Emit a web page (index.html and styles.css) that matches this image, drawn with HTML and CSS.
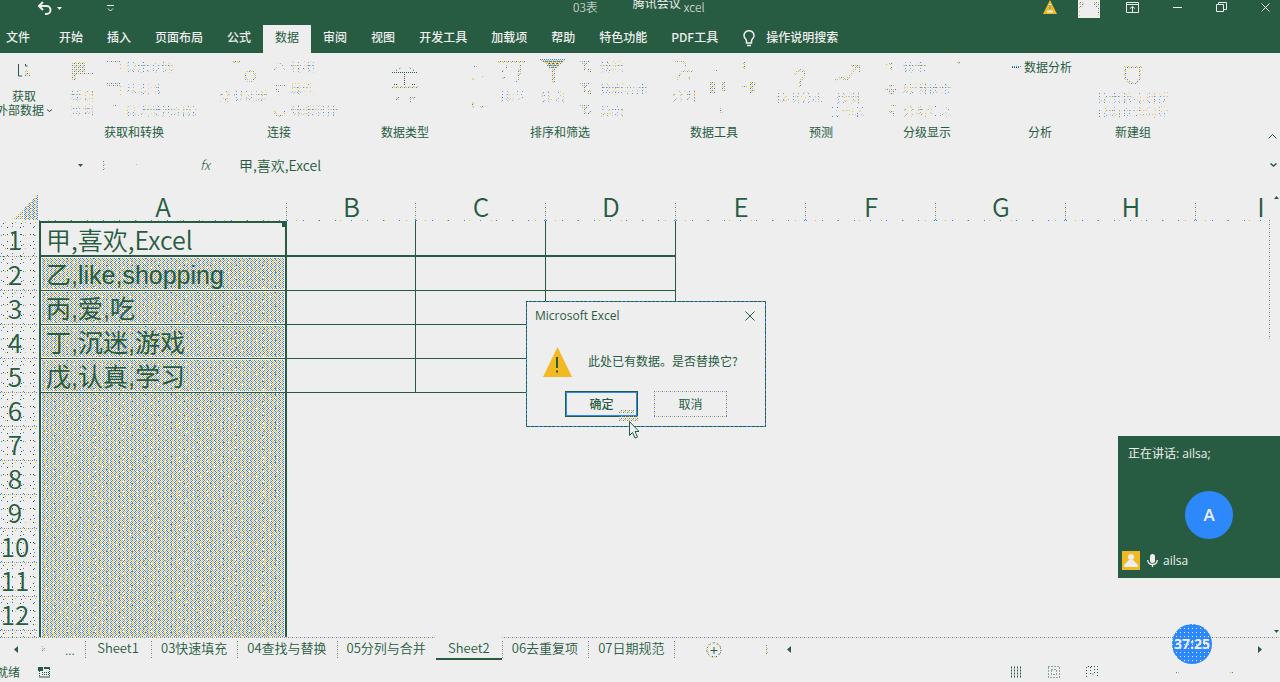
FILE: index.html
```html
<!DOCTYPE html>
<html lang="zh-CN">
<head>
<meta charset="utf-8">
<title>Excel</title>
<link rel="stylesheet" href="styles.css">
</head>
<body>
<svg class="defs" aria-hidden="true">
  <defs>
    <pattern id="dots" width="4" height="4" patternUnits="userSpaceOnUse">
      <path d="M0 0h1v1h-1zM2 2h1v1h-1z" fill="#2d88fb"/>
      <path d="M2 0h1v1h-1zM0 2h1v1h-1zM1 3h1v1h-1z" fill="#f3b922"/>
    </pattern>
  </defs>
</svg>
<div class="app">
  <header class="titlebar">
    <div class="quick">
      <button aria-label="撤消"><svg width="14" height="14" viewBox="0 0 14 14"><path d="M5 1L1 5l4 4M1.500 5h7a3.500 3.500 0 0 1 0 8H7" fill="none" stroke="#eee" stroke-width="2"/></svg></button>
      <button aria-label="撤消选项"><svg width="5" height="3" viewBox="0 0 5 3"><path d="M0 0h5L2.500 3z" fill="#eee"/></svg></button>
      <button class="customize" aria-label="自定义快速访问工具栏"><svg width="7" height="7" viewBox="0 0 7 7"><path d="M0 .5h7M1 3.500l2.500 2.500L6 3.500" fill="none" stroke="#eee"/></svg></button>
    </div>
    <div class="doc-title"><span class="doc-name">03表</span><span class="meeting-name">腾讯会议</span><span class="doc-name">xcel</span></div>
    <div class="window-buttons">
      <svg width="14" height="14" viewBox="0 0 14 14"><path d="M7 0l7 14H0z" fill="#f3b922"/><path d="M7 4v5M4 11.500h6" stroke="#eee" stroke-width="2"/><path d="M7 5v4" stroke="#285c42"/></svg>
      <button class="account" aria-label="帐户"><svg width="22" height="18" viewBox="0 0 22 18"><path d="M1 1h5v4l-2 3H2v8H1zM16 1h5v15h-1V8l-4-2z" fill="url(#dots)"/></svg></button>
      <button aria-label="功能区显示选项"><svg width="13" height="11" viewBox="0 0 13 11"><path d="M.5 .5h12v10H.5zM.5 2.500h12M6.500 10V4.500M4 6.500l2.500-2 2.500 2" fill="none" stroke="#eee"/></svg></button>
      <button aria-label="最小化"><svg width="9" height="10" viewBox="0 0 9 10"><path d="M0 5.500h9" stroke="#eee"/></svg></button>
      <button aria-label="还原"><svg width="11" height="10" viewBox="0 0 11 10"><path d="M.5 2.500h7v7h-7zM2.500 2V.5h8v7H8" fill="none" stroke="#eee"/></svg></button>
      <button aria-label="关闭"><svg width="9" height="9" viewBox="0 0 9 9"><path d="M.5 .5l8 8M8.500 .5l-8 8" stroke="#eee"/></svg></button>
    </div>
  </header>

  <nav class="tabs">
    <button class="file">文件</button><button>开始</button><button>插入</button><button>页面布局</button><button>公式</button><button class="active">数据</button><button>审阅</button><button>视图</button><button>开发工具</button><button>加载项</button><button>帮助</button><button>特色功能</button><button>PDF工具</button>
    <button class="tell-me"><svg width="12" height="17" viewBox="0 0 12 17"><path d="M3.500 11C3.500 9 1 8.500 1 5.500a5 4.800 0 0 1 10 0C11 8.500 8.500 9 8.500 11v2h-5zM4 15.500h4" fill="none" stroke="#eee" stroke-width="1.500"/></svg>操作说明搜索</button>
  </nav>

  <div class="ribbon">
    <section class="group g-external">
      <div class="group-body">
        <button class="big"><svg width="14" height="24" viewBox="0 0 14 24"><path d="M1.500 5v12H5M8.500 5v2h2" fill="none" stroke="#285c42"/><path d="M9 11h3v2h1v5H8v-4z" fill="url(#dots)"/></svg><span>获取</span><span class="drop">外部数据<svg width="5" height="3" viewBox="0 0 5 3"><path d="M0 .5l2.500 2 2.500-2" fill="none" stroke="#285c42"/></svg></span></button>
      </div>
    </section>
    <section class="group g-get">
      <div class="group-body">
        <button class="big faint"><svg width="24" height="24" viewBox="0 0 24 24"><path d="M2 3h14v10h8v2H6v7H2z" fill="url(#dots)"/></svg><span>新建</span><span>查询</span></button>
        <div class="stack">
          <button class="faint"><svg width="14" height="12" viewBox="0 0 14 12"><path d="M0 0h14v2H0zM13 2h1v9h-1z" fill="url(#dots)"/></svg><span>显示查询</span></button>
          <button class="faint"><svg width="14" height="12" viewBox="0 0 14 12"><path d="M0 0h14v3H0zM13 3h1v9h-1z" fill="url(#dots)"/></svg><span>从表格</span></button>
          <button class="faint"><svg width="14" height="12" viewBox="0 0 14 12"><path d="M6 0h3v1H6z" fill="url(#dots)"/></svg><span>最近使用的源</span></button>
        </div>
      </div>
      <h2>获取和转换</h2>
    </section>
    <section class="group g-connect">
      <div class="group-body">
        <button class="big faint"><svg width="28" height="24" viewBox="0 0 28 24"><path d="M4 3h8" stroke="url(#dots)" stroke-width="2" fill="none"/><circle cx="21" cy="17" r="5" fill="none" stroke="url(#dots)" stroke-width="2"/></svg><span>全部刷新</span></button>
        <div class="stack">
          <button class="faint"><svg width="12" height="12" viewBox="0 0 12 12"><path d="M0 9l6-8 5 8" fill="none" stroke="url(#dots)"/></svg><span>连接</span></button>
          <button class="faint"><svg width="12" height="12" viewBox="0 0 12 12"><path d="M1 1h11v2H1zM2 6h3v4H2z" fill="url(#dots)"/></svg><span>属性</span></button>
          <button class="faint"><svg width="12" height="12" viewBox="0 0 12 12"><path d="M1 6a5 5 0 0 0 10 0" fill="none" stroke="url(#dots)" stroke-width="2"/></svg><span>编辑链接</span></button>
        </div>
      </div>
      <h2>连接</h2>
    </section>
    <section class="group g-types">
      <div class="group-body">
        <button class="big faint" aria-label="数据类型"><svg width="26" height="40" viewBox="0 0 26 40"><g fill="none" stroke="#285c42" stroke-dasharray="1 1"><path d="M0 5.500h26M12.500 7v12M2 17.500h4M20 17.500h4"/><path d="M4 3.500L9 .5M22 3.500L17 .5" stroke-dasharray="1 3"/></g><path d="M0 19h26v2H0zM4 30h3v4H4zM17 30h6v2h-3v4h-2z" fill="url(#dots)"/></svg></button>
      </div>
      <h2>数据类型</h2>
    </section>
    <section class="group g-sort">
      <div class="group-body">
        <div class="az"><svg width="12" height="54" viewBox="0 0 12 54"><path d="M2 10h3v2H2zM0 22h2v2H0zM9 20h2v2H9zM0 46h2v6H0zM8 50h3v2H8z" fill="url(#dots)"/></svg></div>
        <button class="big faint sort"><svg width="28" height="24" viewBox="0 0 28 24"><path d="M0 1h28v3H0zM7 5h2v4H7zM4 11h2v3H4zM4 17h4v3H4zM20 10h2v3h-2zM22 5h1v8l-3 10h-2l3-10z" fill="url(#dots)"/></svg><span>排序</span></button>
        <button class="big faint filter"><svg width="26" height="25" viewBox="0 0 26 25"><path d="M0 0h26L15 10v14h-3V10z" fill="url(#dots)"/><path d="M0 .5h26M3 2.500h20M7 6.500h12M9 8.500h8" stroke="#2d88fb" stroke-dasharray="1 1"/><path d="M1 1.500h24M5 3.500h17M8 5.500h12" stroke="#f3b922" stroke-dasharray="1 1"/><path d="M9 4.500h9" stroke="#285c42" stroke-dasharray="1 3"/></svg><span>筛选</span></button>
        <div class="stack">
          <button class="faint"><svg width="15" height="12" viewBox="0 0 15 12"><path d="M0 0h10L6 4v5H4V4zM8 8h4v3H8z" fill="url(#dots)"/></svg><span>清除</span></button>
          <button class="faint"><svg width="15" height="12" viewBox="0 0 15 12"><path d="M0 0h10L6 4v5H4V4zM8 7h4v4H8z" fill="url(#dots)"/></svg><span>重新应用</span></button>
          <button class="faint"><svg width="15" height="12" viewBox="0 0 15 12"><path d="M0 0h10L6 4v5H4V4zM6 9l6-4v2L7 11z" fill="url(#dots)"/></svg><span>高级</span></button>
        </div>
      </div>
      <h2>排序和筛选</h2>
    </section>
    <section class="group g-tools">
      <div class="group-body">
        <button class="big faint"><svg width="18" height="24" viewBox="0 0 18 24"><path d="M0 2h8l4 6M6 12h12M6 13L2 22M14 18v3" fill="none" stroke="url(#dots)" stroke-width="1.500"/></svg><span>分列</span></button>
        <svg width="18" height="58" viewBox="0 0 18 58"><path d="M0 26h5v12H0zM11 26h5v4l-3 2h3v3h-5zM5 14h2v1H5zM10 50l3 8h-3z" fill="url(#dots)"/></svg>
        <svg width="14" height="58" viewBox="0 0 14 58"><path d="M1 6h3v7H1zM0 29h6v2H0zM8 25h6v1l-4 12H8zM12 34h2v1h-2z" fill="url(#dots)"/></svg>
      </div>
      <h2>数据工具</h2>
    </section>
    <section class="group g-forecast">
      <div class="group-body">
        <button class="big faint"><svg width="12" height="28" viewBox="0 0 12 28"><path d="M1 16c0-6 10-6 10-1 0 4-5 4-5 8v5" fill="none" stroke="url(#dots)" stroke-width="2"/></svg><span>模拟分析</span></button>
        <button class="big faint"><svg width="26" height="28" viewBox="0 0 26 28"><path d="M0 22l6-4 5 3L23 7M16 7h8v7" fill="none" stroke="url(#dots)" stroke-width="2"/></svg><span>预测</span><span>工作表</span></button>
      </div>
      <h2>预测</h2>
    </section>
    <section class="group g-outline">
      <div class="group-body">
        <div class="stack">
          <button class="faint"><svg width="13" height="12" viewBox="0 0 13 12"><path d="M0 3h3v1H0zM4 2h4v2H4zM5 5h2v5H5z" fill="url(#dots)"/></svg><span>组合</span></button>
          <button class="faint"><svg width="13" height="12" viewBox="0 0 13 12"><path d="M3 1h6v3H3zM0 6h12v1H0zM4 8h6v3H4z" fill="url(#dots)"/></svg><span>取消组合</span></button>
          <button class="faint"><svg width="13" height="12" viewBox="0 0 13 12"><path d="M6 0h5v1H6zM3 6h6v5H7V8H4z" fill="url(#dots)"/></svg><span>分类汇总</span></button>
        </div>
        <svg class="detail" width="12" height="12" viewBox="0 0 12 12"><path d="M0 6h4v2H0zM9 9h2v1H9z" fill="url(#dots)"/></svg>
      </div>
      <h2>分级显示</h2>
    </section>
    <section class="group g-analysis">
      <div class="group-body">
        <button class="analysis"><svg width="9" height="6" viewBox="0 0 9 6"><path d="M0 2.500h9" stroke="#2d88fb" stroke-dasharray="1 1"/><path d="M0 3.500h7" stroke="#285c42" stroke-dasharray="1 1"/></svg><span>数据分析</span></button>
      </div>
      <h2>分析</h2>
    </section>
    <section class="group g-new">
      <div class="group-body">
        <button class="big faint"><svg width="20" height="28" viewBox="0 0 20 28"><path d="M1 8h18M2 9v10l5 5h6l4-5V9" fill="none" stroke="url(#dots)" stroke-width="2"/></svg><span>显示数据透视</span><span>自动查询向导</span></button>
      </div>
      <h2>新建组</h2>
    </section>
    <button class="collapse" aria-label="折叠功能区"><svg width="9" height="5" viewBox="0 0 9 5"><path d="M.5 4.500l4-4 4 4" fill="none" stroke="#285c42"/></svg></button>
  </div>

  <div class="formula-bar">
    <button class="name-box" aria-label="名称框"><svg width="5" height="3" viewBox="0 0 5 3"><path d="M0 0h5L2.500 3z" fill="#285c42"/></svg></button>
    <svg width="80" height="16" viewBox="0 0 80 16"><path d="M0 4h2v9H0zM33 7h1v1h-1zM66 11h1v1h-1z" fill="url(#dots)"/></svg>
    <span class="fx">fx</span>
    <input aria-label="编辑栏" value="甲,喜欢,Excel">
    <button class="expand" aria-label="展开编辑栏"><svg width="7" height="4" viewBox="0 0 7 4"><path d="M.5 .5l3 2.500 3-2.500" fill="none" stroke="#285c42" stroke-width="1.500"/></svg></button>
  </div>

  <main class="workspace">
    <div class="grid">
      <table>
        <colgroup><col class="c-num"><col class="c-a"><col class="c-b"><col class="c"><col class="c"><col class="c"><col class="c"><col class="c"><col class="c"><col class="c"></colgroup>
        <thead><tr><th class="corner"><svg width="26" height="26" viewBox="0 0 26 26"><path d="M26 0v26H0z" fill="url(#dots)"/><path d="M25.500 1v25M21.500 5v21M17.500 9v17M13.500 13v13" stroke="#2d88fb" stroke-dasharray="1 1"/><path d="M23.500 4v22M19.500 8v18M15.500 12v14" stroke="#f3b922" stroke-dasharray="1 2"/></svg></th><th>A</th><th>B</th><th>C</th><th>D</th><th>E</th><th>F</th><th>G</th><th>H</th><th>I</th></tr></thead>
        <tbody>
          <tr class="filled first"><th>1</th><td class="a">甲,喜欢,Excel<i class="handle"></i></td><td></td><td></td><td></td></tr>
          <tr class="filled"><th>2</th><td class="a">乙,like,shopping</td><td></td><td></td><td></td></tr>
          <tr class="filled"><th>3</th><td class="a">丙,爱,吃</td><td></td><td></td><td></td></tr>
          <tr class="filled"><th>4</th><td class="a">丁,沉迷,游戏</td><td></td><td></td><td></td></tr>
          <tr class="filled"><th>5</th><td class="a">戊,认真,学习</td><td></td><td></td><td></td></tr>
          <tr><th>6</th><td class="a"></td></tr>
          <tr><th>7</th><td class="a"></td></tr>
          <tr><th>8</th><td class="a"></td></tr>
          <tr><th>9</th><td class="a"></td></tr>
          <tr><th>10</th><td class="a"></td></tr>
          <tr><th>11</th><td class="a"></td></tr>
          <tr><th>12</th><td class="a"></td></tr>
          <tr><th></th><td class="a"></td></tr>
        </tbody>
      </table>
    </div>
    <div class="vscroll"><svg width="5" height="3" viewBox="0 0 5 3"><path d="M0 3h5L2.500 0z" fill="#285c42"/></svg><svg width="5" height="3" viewBox="0 0 5 3"><path d="M0 0h5L2.500 3z" fill="#285c42"/></svg></div>
  </main>

  <nav class="sheets">
    <div class="sheet-nav">
      <button aria-label="上一张"><svg width="4" height="7" viewBox="0 0 4 7"><path d="M4 0v7L0 3.500z" fill="#285c42"/></svg></button>
      <button aria-label="下一张"><svg width="4" height="7" viewBox="0 0 4 7"><path d="M0 0v7l4-3.500z" fill="url(#dots)"/></svg></button>
      <span>...</span>
    </div>
    <button class="sheet">Sheet1</button><button class="sheet">03快速填充</button><button class="sheet">04查找与替换</button><button class="sheet">05分列与合并</button><button class="sheet current">Sheet2</button><button class="sheet">06去重复项</button><button class="sheet">07日期规范</button>
    <button class="add" aria-label="新工作表"><svg width="16" height="16" viewBox="0 0 16 16"><circle cx="8" cy="8" r="7" fill="none" stroke="url(#dots)" stroke-width="1.500"/><circle cx="8" cy="8" r="7" fill="none" stroke="#285c42" stroke-dasharray="1 3"/><path d="M8 5v7M4.500 8.500h7" stroke="#285c42"/></svg></button>
    <div class="hscroll">
      <svg width="2" height="10" viewBox="0 0 2 10"><path d="M0 0h2v10H0z" fill="url(#dots)"/></svg>
      <svg class="left" width="4" height="7" viewBox="0 0 4 7"><path d="M4 0v7L0 3.500z" fill="#285c42"/></svg>
      <svg class="right" width="4" height="7" viewBox="0 0 4 7"><path d="M0 0v7l4-3.500z" fill="#285c42"/></svg>
    </div>
  </nav>

  <footer class="status">
    <span>就绪</span>
    <svg width="13" height="12" viewBox="0 0 13 12"><path d="M0 1h5v4H0zM6 1h6v2H6zM1 10.500h11v1H1z" fill="#285c42"/><path d="M1.500 5v5M4 6.500h8M4 8.500h8M11.500 3v7" stroke="#285c42" stroke-dasharray="1 1"/></svg>
    <div class="views">
      <button aria-label="普通"><svg width="12" height="12" viewBox="0 0 12 12"><path d="M1.500 .5v11M4.500 .5v11M7.500 .5v11M10.500 .5v11" fill="none" stroke="#285c42" stroke-dasharray="2 1"/></svg></button>
      <button aria-label="页面布局"><svg width="12" height="12" viewBox="0 0 12 12"><path d="M.5 .5h11v11H.5zM3.500 3.500h5v5h-5z" fill="none" stroke="#285c42" stroke-dasharray="1 2"/></svg></button>
      <button aria-label="分页预览"><svg width="12" height="12" viewBox="0 0 12 12"><path d="M.5 11V.5h11V11M4.500 1v7h4V1" fill="none" stroke="#285c42" stroke-dasharray="1 2"/></svg></button>
      <svg class="zoom" width="130" height="4" viewBox="0 0 130 4"><path d="M0 1h3v1H0zM58 2h3v1h-3zM112 1h3v2h-3z" fill="url(#dots)"/></svg>
    </div>
  </footer>
</div>

<div class="dialog" role="alertdialog" aria-labelledby="dlg-title">
  <div class="dialog-head"><span id="dlg-title">Microsoft Excel</span><button aria-label="关闭"><svg width="10" height="10" viewBox="0 0 10 10"><path d="M.5 .5l9 9M9.500 .5l-9 9" stroke="#285c42"/></svg></button></div>
  <div class="dialog-body"><svg width="29" height="30" viewBox="0 0 29 30"><path d="M14.500 0L29 30H0z" fill="#f3b922"/><path d="M14 10v11M14 23.500v2" stroke="#285c42" stroke-width="2"/></svg><p>此处已有数据。是否替换它?</p></div>
  <div class="dialog-actions"><button class="ok">确定</button><button class="cancel">取消</button></div>
</div>
<svg class="cursor" width="20" height="32" viewBox="0 0 20 32"><path d="M3 1h12v4H0v-2zM0 8h20v6H0z" fill="url(#dots)"/><path d="M10.500 13.500v14l3-3 2.500 5.500 2.500-1-2.500-5.500h4z" fill="#eee" stroke="#285c42"/></svg>

<aside class="meeting">
  <p>正在讲话: ailsa;</p>
  <div class="avatar">A</div>
  <div class="member"><svg width="18" height="19" viewBox="0 0 18 19"><path d="M0 0h18v19H0z" fill="#f3b922"/><circle cx="9" cy="6" r="3" fill="#eee"/><path d="M2 16v-2l5-5h4l5 5v2z" fill="#eee"/></svg><svg width="11" height="13" viewBox="0 0 11 13"><rect x="3" y="0" width="5" height="9" rx="2.500" fill="#eee"/><path d="M.7 6c0 6 9.600 6 9.600 0M5.500 10.500V13" fill="none" stroke="#eee" stroke-width="1.400"/></svg><span>ailsa</span></div>
</aside>
<div class="timer">37:25</div>
</body>
</html>
```
FILE: styles.css
```css
:root {
  --green: #285c42;
  --paper: #eeeeee;
  --blue: #2d88fb;
  --amber: #f3b922;
  --b: conic-gradient(at 1px 1px, transparent 75%, var(--blue) 0);
  --y: conic-gradient(at 1px 1px, transparent 75%, var(--amber) 0);
  --g: conic-gradient(at 1px 1px, transparent 75%, var(--green) 0);
  --p: conic-gradient(at 1px 1px, transparent 75%, var(--paper) 0);
  --dash-x: repeating-linear-gradient(90deg, var(--blue) 0 1px, transparent 1px 2px, var(--amber) 2px 3px, transparent 3px 4px);
  --dash-y: repeating-linear-gradient(var(--blue) 0 1px, transparent 1px 2px, var(--amber) 2px 3px, transparent 3px 4px);
}
* { box-sizing: border-box; }
body {
  margin: 0;
  background: var(--paper);
  color: var(--green);
  font: 12px/14px "Noto Sans CJK SC", "Noto Sans", sans-serif;
  position: relative;
}
button, input { font: inherit; color: inherit; background: none; border: 0; padding: 0; margin: 0; }
svg { display: block; flex: none; }
h2, p { margin: 0; font-size: 12px; font-weight: 400; }
.defs { position: absolute; width: 0; height: 0; }
.app { height: 100vh; display: flex; flex-direction: column; overflow: hidden; }

.titlebar { background: var(--green); color: var(--paper); height: 25px; display: flex; justify-content: space-between; position: relative; }
.quick { display: flex; align-items: center; gap: 5px; height: 16px; padding-left: 38px; }
.customize { margin-left: 40px; }
.doc-title { position: absolute; left: 573px; top: 0; display: flex; align-items: flex-start; }
.doc-name { font-weight: 300; }
.meeting-name { margin: -4px 3px 0 35px; }
.window-buttons { display: flex; align-items: flex-start; padding-right: 10px; }
.window-buttons > button { height: 14px; margin-left: 34px; }
.window-buttons > .account { background: var(--paper); height: 18px; margin: 0 -8px 0 21px; }

.tabs { background: var(--green); color: var(--paper); display: flex; height: 28px; font-weight: 500; }
.tabs button { padding: 0 12px 4px; }
.tabs .file { padding: 0 17px 4px 6px; }
.tabs .active { background: var(--paper); color: var(--green); font-weight: 400; }
.tabs .tell-me { display: flex; align-items: center; gap: 11px; padding: 0 4px 4px 13px; }
.tell-me svg { margin-top: 3px; }

.ribbon { display: flex; height: 92px; padding-top: 3px; position: relative; }
.group { display: flex; flex-direction: column; align-items: center; flex: none; }
.group-body { display: flex; justify-content: center; height: 68px; gap: 6px; white-space: nowrap; }
.group h2 { line-height: 16px; }
.g-external { width: 54px; }
.g-external .big { margin-left: -6px; }
.drop { display: flex; align-items: center; gap: 3px; }
.drop svg { margin: 0; }
.g-get { width: 160px; }
.g-connect { width: 130px; }
.g-types { width: 122px; }
.g-sort { width: 188px; }
.g-tools { width: 120px; }
.g-forecast { width: 94px; }
.g-outline { width: 118px; }
.g-analysis { width: 108px; }
.g-new { width: 78px; }
.g-get .group-body { gap: 12px; }
.g-tools .group-body { gap: 14px; }
.g-sort .group-body { gap: 14px; margin-left: 0; }
.big { display: flex; flex-direction: column; align-items: center; text-align: center; }
.big > svg { margin: 3px 0 6px; }
.g-types .big { padding-top: 8px; }
.g-forecast .big > svg, .g-new .big > svg { margin: 3px 0 4px; }
.stack { display: flex; flex-direction: column; }
.stack button, .analysis { display: flex; align-items: center; gap: 5px; height: 22px; }
.analysis { margin-left: 4px; gap: 3px; }
.faint span {
  color: transparent;
  background: var(--b) 0 0/3px 5px, var(--y) 1px 1px/3px 4px, var(--b) 2px 2px/5px 3px, var(--y) 1px 3px/7px 3px;
  -webkit-background-clip: text;
  background-clip: text;
}
.collapse { margin-left: auto; padding: 0 3px 6px 0; align-self: flex-end; }

.formula-bar { display: flex; align-items: center; height: 40px; }
.name-box { padding: 0 20px 0 78px; }
.formula-bar .fx { width: 56px; padding-right: 12px; text-align: center; font: italic 300 13px/16px "Noto Sans CJK SC", sans-serif; }
.formula-bar input { flex: 1; min-width: 0; font-size: 14px; font-weight: 350; }
.expand { padding-right: 3px; }

.workspace { flex: 1; min-height: 0; display: flex; padding-top: 5px; }
.grid { flex: 1; min-width: 0; overflow: hidden; }
table { border-spacing: 0; table-layout: fixed; width: 1326px; font-size: 26px; line-height: 30px; }
.c-num { width: 39px; }
.c-a { width: 248px; }
.c-b { width: 129px; }
.c { width: 130px; }
th, td { padding: 0; font-weight: 350; text-align: center; }
thead th { height: 31px; background: var(--dash-y) 100% 100%/1px 18px no-repeat, var(--b) 0 30px/16px 31px, var(--y) 9px 30px/22px 31px; }
thead .corner { background: none; }
.corner svg { margin: 3px 0 0 12px; }
tbody tr { height: 34px; }
tbody th {
  padding-right: 9px;
  background: var(--dash-x) 0 100%/38px 1px no-repeat, var(--g) 3px 2px/9px 11px, var(--g) 7px 6px/13px 7px, var(--b) 1px 5px/11px 9px, var(--y) 5px 1px/10px 13px;
}
td.a {
  text-align: left;
  padding: 2px 0 0 5px;
  font: 400 25px/30px "Liberation Sans", "Noto Sans CJK SC", sans-serif;
  border-left: 2px solid var(--green);
  border-right: 2px solid var(--green);
  box-shadow: inset 1px 0 var(--paper), inset -1px 0 var(--paper);
  background:
    var(--p) 0 0/7px 5px,
    var(--b) 2px 1px/13px 7px,
    var(--y) 5px 4px/11px 9px,
    var(--b) 0 0/4px 2px,
    var(--y) 2px 0/4px 2px,
    var(--y) 1px 1px/4px 4px,
    var(--b) 3px 1px/4px 4px,
    var(--b) 1px 3px/4px 4px,
    var(--y) 3px 3px/4px 4px;
  background-origin: border-box;
  position: relative;
}
.filled td { border-right: 1px solid var(--green); border-bottom: 1px solid var(--green); }
.filled td.a { border-right-width: 2px; box-shadow: inset 0 0 0 1px var(--paper); }
.first { height: 36px; }
.filled.first td { border-bottom-width: 2px; }
.first td.a { background: none; border-top: 2px solid var(--green); padding-top: 0; font-family: "Noto Sans CJK SC", sans-serif; font-weight: 350; }
.handle { position: absolute; right: -2px; top: -1px; width: 5px; height: 5px; background: var(--green); }
.vscroll { width: 12px; display: flex; flex-direction: column; justify-content: space-between; align-items: flex-end; padding: 6px 1px 4px 0; background: var(--dash-y) 1px 30px/1px 120px no-repeat; }

.sheets { display: flex; height: 25px; background: var(--dash-x) 0 0/100% 1px no-repeat; font-size: 13px; font-weight: 300; }
.sheet-nav { display: flex; align-items: center; width: 85px; padding-left: 14px; gap: 24px; }
.sheet-nav span { margin-left: -5px; }
.sheet { min-width: 66px; padding: 0 10px 4px; background: var(--dash-y) 0 4px/1px 17px no-repeat; font-weight: 350; white-space: nowrap; }
.sheet.current { background: var(--paper); border-bottom: 2px solid var(--green); height: 23px; padding-bottom: 0; }
.add { padding: 0 32px; background: var(--dash-y) 0 4px/1px 17px no-repeat; }
.hscroll { flex: 1; display: flex; align-items: center; padding: 0 18px 0 12px; }
.hscroll .left { margin-left: 19px; }
.hscroll .right { margin-left: auto; }

.status { display: flex; align-items: center; height: 20px; }
.status span { margin: 0 18px 0 -4px; }
.views { margin-left: auto; display: flex; align-items: center; gap: 26px; padding-right: 32px; }
.views .zoom { margin-left: -6px; }

.dialog {
  position: absolute;
  left: 526px;
  top: 301px;
  width: 240px;
  background: var(--paper);
  border: 1px solid var(--green);
  border-image: repeating-linear-gradient(45deg, var(--blue) 0 1px, var(--green) 1px 3px) 1;
}
.dialog-head { display: flex; justify-content: space-between; align-items: center; height: 28px; padding: 0 10px 0 8px; font-family: "Open Sans", "Noto Sans CJK SC", sans-serif; }
.dialog-body { display: flex; align-items: center; gap: 16px; padding: 17px 0 14px 16px; white-space: nowrap; }
.dialog-body p { padding-bottom: 3px; }
.dialog-actions { display: flex; justify-content: center; gap: 16px; padding-bottom: 9px; }
.dialog-actions button { width: 73px; height: 26px; }
.dialog-actions .ok { border: 2px solid var(--blue); outline: 1px solid var(--green); outline-offset: -1px; font-weight: 500; }
.cancel { background: var(--dash-x) 0 0/100% 1px no-repeat, var(--dash-x) 0 100%/100% 1px no-repeat, var(--dash-y) 0 0/1px 100% no-repeat, var(--dash-y) 100% 0/1px 100% no-repeat; }
.cursor { position: absolute; left: 619px; top: 408px; }

.meeting { position: absolute; right: 0; top: 436px; width: 162px; background: var(--green); color: var(--paper); padding: 10px 10px 8px 4px; font-family: "Open Sans", "Noto Sans CJK SC", sans-serif; }
.meeting p { padding-left: 6px; line-height: 16px; }
.avatar { width: 48px; height: 48px; border-radius: 50%; background: var(--blue); margin: 29px auto 12px 63px; font-size: 17px; line-height: 48px; text-align: center; font-weight: 600; }
.member { display: flex; align-items: center; gap: 7px; }
.member svg + svg { margin-right: -2px; }
.timer {
  position: absolute;
  right: 68px;
  top: 624px;
  width: 40px;
  height: 40px;
  border-radius: 50%;
  background: var(--p) 0 0/4px 4px, var(--blue);
  color: var(--paper);
  font: 700 14px/40px "Open Sans", sans-serif;
  text-align: center;
}
```
